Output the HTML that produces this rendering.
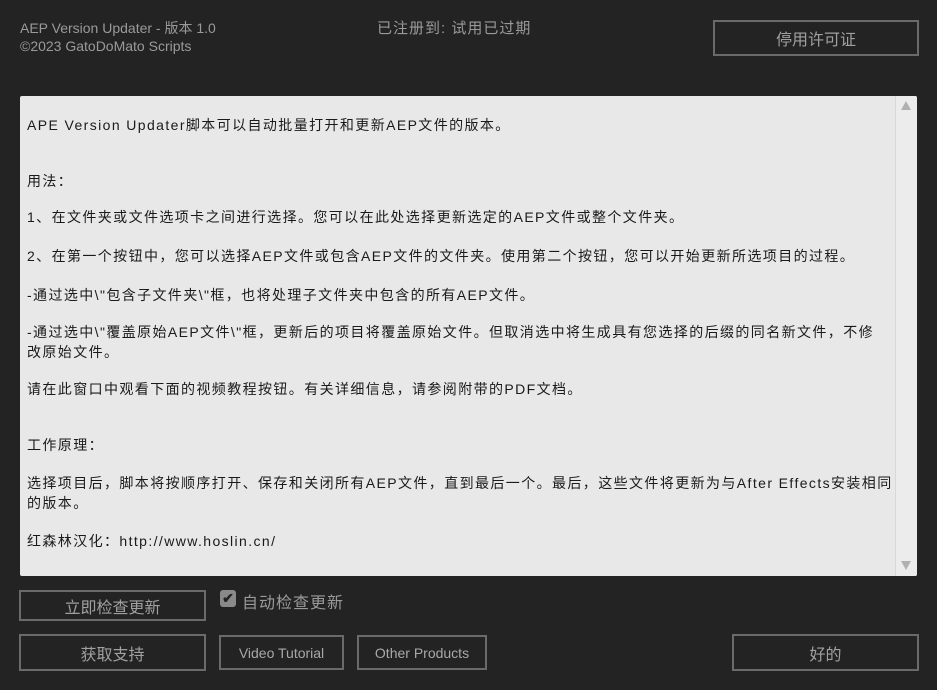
<!DOCTYPE html>
<html><head><meta charset="utf-8"><style>
*{margin:0;padding:0;box-sizing:border-box}
body{width:937px;height:690px;background:#232323;font-family:"Liberation Sans","Noto Sans CJK SC",sans-serif;color:#9a9a9a;position:relative;overflow:hidden}
.a{position:absolute;white-space:nowrap}
.btn{position:absolute;border:2px solid #6a6a6a;color:#a0a0a0;display:flex;align-items:center;justify-content:center;font-size:16px}
.ta{position:absolute;left:20px;top:96px;width:897px;height:480px;background:#e8e8e8;border-radius:2px;overflow:hidden}
.sb{position:absolute;left:875px;top:0;width:22px;height:480px;background:#ececec;border-left:1px solid #d8d8d8}
.p{position:absolute;left:7px;font-size:14px;color:#1a1a1a;letter-spacing:1.4px;line-height:20px;white-space:nowrap}
</style></head><body>
<div class="a" style="left:20px;top:18px;font-size:14px;color:#9a9a9a">AEP Version Updater - 版本 1.0</div>
<div class="a" style="left:20px;top:38px;font-size:14px;color:#9a9a9a">©2023 GatoDoMato Scripts</div>
<div class="a" style="left:377px;top:17px;font-size:15px;color:#9a9a9a;letter-spacing:1px">已注册到: 试用已过期</div>
<div class="btn" style="left:713px;top:20px;width:206px;height:36px">停用许可证</div>
<div class="ta">
<div class="p" style="top:19px">APE Version Updater脚本可以自动批量打开和更新AEP文件的版本。</div>
<div class="p" style="top:75px">用法：</div>
<div class="p" style="top:111px">1、在文件夹或文件选项卡之间进行选择。您可以在此处选择更新选定的AEP文件或整个文件夹。</div>
<div class="p" style="top:150px">2、在第一个按钮中，您可以选择AEP文件或包含AEP文件的文件夹。使用第二个按钮，您可以开始更新所选项目的过程。</div>
<div class="p" style="top:189px">-通过选中\"包含子文件夹\"框，也将处理子文件夹中包含的所有AEP文件。</div>
<div class="p" style="top:226px">-通过选中\"覆盖原始AEP文件\"框，更新后的项目将覆盖原始文件。但取消选中将生成具有您选择的后缀的同名新文件，不修<br>改原始文件。</div>
<div class="p" style="top:283px">请在此窗口中观看下面的视频教程按钮。有关详细信息，请参阅附带的PDF文档。</div>
<div class="p" style="top:339px">工作原理：</div>
<div class="p" style="top:377px">选择项目后，脚本将按顺序打开、保存和关闭所有AEP文件，直到最后一个。最后，这些文件将更新为与After Effects安装相同<br>的版本。</div>
<div class="p" style="top:435px">红森林汉化：http://www.hoslin.cn/</div>
<div class="sb"><div style="position:absolute;left:5px;top:5px;width:0;height:0;border-left:5px solid transparent;border-right:5px solid transparent;border-bottom:9px solid #b0b0b0"></div><div style="position:absolute;left:5px;top:465px;width:0;height:0;border-left:5px solid transparent;border-right:5px solid transparent;border-top:9px solid #b0b0b0"></div></div>
</div>
<div class="btn" style="left:19px;top:590px;width:187px;height:31px">立即检查更新</div>
<div style="position:absolute;left:220px;top:590px;width:16px;height:17px;background:#8a8a8a;border-radius:3px;color:#232323;font-size:14px;text-align:center;line-height:17px;font-weight:bold">✔</div>
<div class="a" style="left:242px;top:589px;font-size:16px;color:#9a9a9a;letter-spacing:1px">自动检查更新</div>
<div class="btn" style="left:19px;top:634px;width:187px;height:37px">获取支持</div>
<div class="btn" style="left:219px;top:635px;width:125px;height:35px;font-size:14px;color:#a8a8a8">Video Tutorial</div>
<div class="btn" style="left:357px;top:635px;width:130px;height:35px;font-size:14px;color:#a8a8a8">Other Products</div>
<div class="btn" style="left:732px;top:634px;width:187px;height:37px">好的</div>
</body></html>
